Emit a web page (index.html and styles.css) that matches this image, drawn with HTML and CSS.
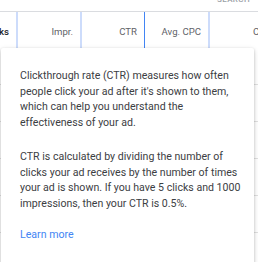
FILE: index.html
```html
<!DOCTYPE html>
<html lang="en">
<head>
    <meta charset="UTF-8">
    <meta name="viewport" content="width=device-width, initial-scale=1.0">
    <title>CTR help</title>
    <link rel="stylesheet" href="styles.css">
</head>
<body>

<div class="toolbar">
    <span class="search-btn">SEARCH</span>
</div>

<div class="table">
    <div class="header-row">
        <div class="cell bold">Clicks</div>
        <div class="cell">Impr.</div>
        <div class="cell">CTR</div>
        <div class="cell active">Avg. CPC</div>
        <div class="cell wide">Conversions</div>
    </div>
    <div class="row"></div>
    <div class="row"></div>
    <div class="row"></div>
    <div class="row"></div>
    <div class="row"></div>
    <div class="row"></div>
</div>

<div class="popup">
    <p>Clickthrough rate (CTR) measures how often people click your ad after it's shown to them, which can help you understand the effectiveness of your ad.</p>
    <p>CTR is calculated by dividing the number of clicks your ad receives by the number of times your ad is shown. If you have 5 clicks and 1000 impressions, then your CTR is 0.5%.</p>
    <a href="#" class="learn-more">Learn more</a>
</div>

</body>
</html>
```

FILE: styles.css
```css
body {
    margin: 0;
    font-family: Roboto, "Liberation Sans", Arial, sans-serif;
    background: white;
    width: 258px;
    height: 262px;
    overflow: hidden;
    position: relative;
}
.toolbar {
    height: 11px;
    display: flex;
    justify-content: flex-end;
    overflow: hidden;
}
.search-btn {
    font-size: 8px;
    line-height: 8px;
    margin-top: -4px;
    margin-right: 8px;
    color: #9aa0a6;
    font-weight: 500;
    letter-spacing: 0.4px;
}
.table {
    border-top: 1px solid #dadce0;
}
.header-row {
    display: flex;
    margin-left: -48px;
    height: 36px;
}
.cell {
    flex: none;
    box-sizing: border-box;
    width: 64px;
    padding: 14px 7px 0 0;
    text-align: right;
    font-size: 9.6px;
    line-height: 12px;
    color: #5f6368;
    border-left: 2px solid #cddcfb;
    white-space: nowrap;
}
.cell.bold {
    border-left: none;
    color: #202124;
    font-weight: 500;
}
.cell.active {
    border-left: 1px solid #4285f4;
}
.cell.wide {
    width: 124px;
    text-align: left;
    padding-left: 43px;
}
.row {
    height: 36px;
    border-bottom: 1px solid #e0e0e0;
}
.popup {
    position: absolute;
    top: 48px;
    left: 1px;
    width: 253px;
    height: 240px;
    box-sizing: border-box;
    padding: 20px 12px 20px 19px;
    background: white;
    border-radius: 2px;
    box-shadow: 0 1px 3px rgba(0, 0, 0, 0.2), 0 2px 6px rgba(0, 0, 0, 0.12);
    font-size: 10.6px;
    line-height: 15.5px;
    color: #3c4043;
}
.popup p {
    margin: 0 0 19px 0;
}
.popup p + p {
    margin-bottom: 16px;
}
.learn-more {
    color: #4285f4;
    text-decoration: none;
}
```
